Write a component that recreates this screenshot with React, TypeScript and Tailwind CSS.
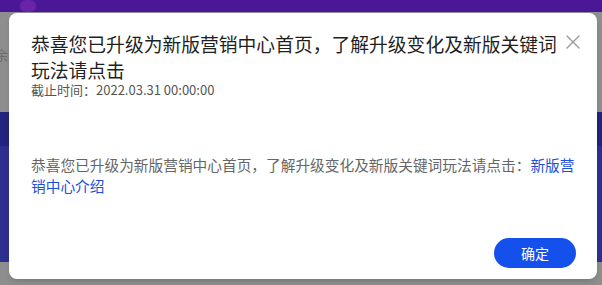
import React from 'react';

const FONT = { fontFamily: '"Noto Sans CJK SC", "Liberation Sans", sans-serif' };

const CloseIcon: React.FC = () => (
  <svg width="14" height="14" viewBox="0 0 14 14" fill="none" stroke="#9a9a9a" strokeWidth="1.4" strokeLinecap="round">
    <line x1="1" y1="1" x2="13" y2="13" />
    <line x1="13" y1="1" x2="1" y2="13" />
  </svg>
);

export default function App() {
  return (
    <div className="relative w-[602px] h-[285px] overflow-hidden" style={FONT}>
      {/* page behind the mask */}
      <div className="flex flex-col h-full">
        <div className="h-[12px] bg-[#4a1896] flex">
          <div className="ml-[20px] w-[16px] h-[12px] rounded-full bg-[#6a22a8]" />
        </div>
        <div className="h-[100px] bg-[#8e8e8e] flex items-center">
          <span className="ml-[-5px] mt-[-14px] text-[13px] text-[#6c6c6c]">余</span>
        </div>
        <div className="h-[34px] bg-[#23247e]" />
        <div className="h-[116px] bg-[#2e3090]" />
        <div className="flex-1 bg-[#8e8e8e]" />
      </div>

      {/* dialog */}
      <div className="absolute left-[9px] top-[13px] w-[588px] h-[266px] bg-white rounded-lg shadow-md flex flex-col pl-[22px] pr-[21px] pt-[18px] pb-[11px]">
        <button className="absolute right-[17px] top-[22px]">
          <CloseIcon />
        </button>
        <h2 className="w-[535px] text-[18.8px] leading-[26px] text-[#1f1f1f] font-normal">
          恭喜您已升级为新版营销中心首页，了解升级变化及新版关键词玩法请点击
        </h2>
        <p className="text-[13px] leading-[14px] text-[#555]">截止时间：2022.03.31 00:00:00</p>
        <p className="mt-[57px] w-[549px] text-[14.7px] leading-[21px] text-[#666]">
          恭喜您已升级为新版营销中心首页，了解升级变化及新版关键词玩法请点击：
          <a className="text-[#1c4fdc]">新版营销中心介绍</a>
        </p>
        <div className="mt-auto flex justify-end">
          <button className="w-[82px] h-[30px] rounded-full bg-[#1450ec] text-white text-[14px] leading-[30px]">
            确定
          </button>
        </div>
      </div>
    </div>
  );
}
